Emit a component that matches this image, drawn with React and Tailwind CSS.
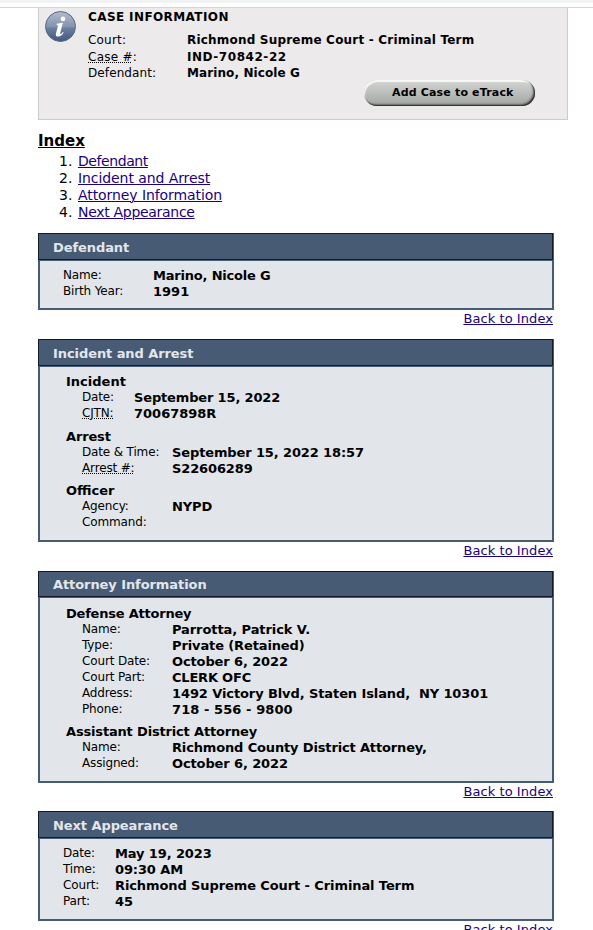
const caseRows = [
  ["Court:", "Richmond Supreme Court - Criminal Term", "h-[17px]", "tracking-[0.2px]", "tracking-[0.2px]"],
  ["Case #:", "IND-70842-22", "h-4", "tracking-[0.25px]", "tracking-[0.55px]"],
  ["Defendant:", "Marino, Nicole G", "h-4", "tracking-[0.1px]", "tracking-[0.1px]"],
];

const indexItems = [
  ["Defendant", "tracking-[-0.42px]"],
  ["Incident and Arrest", "tracking-[-0.08px]"],
  ["Attorney Information", "tracking-[-0.08px]"],
  ["Next Appearance", "tracking-[-0.3px]"],
];

function InfoIcon() {
  return (
    <svg className="h-[31px] w-[31px] shrink-0" viewBox="0 0 31 31">
      <defs>
        <linearGradient id="ball" x1="0" y1="0" x2="0" y2="1">
          <stop offset="0" stopColor="#b4bccb" />
          <stop offset="0.5" stopColor="#8494ae" />
          <stop offset="0.56" stopColor="#6b7f9f" />
          <stop offset="1" stopColor="#3f587c" />
        </linearGradient>
      </defs>
      <circle cx="15.5" cy="15.5" r="15" fill="url(#ball)" stroke="#566984" strokeWidth="1" />
      <circle cx="18" cy="7.9" r="2.3" fill="#fff" />
      <path
        d="M11.6 12.8 L17.9 11.7 L15.2 22 Q15 23.4 16.2 22.7 Q17.1 22.1 17.9 21 L18.7 21.5 Q16.4 25.3 13.2 25.6 Q10.2 25.6 10.9 22.7 L13 15 Q13.2 13.9 11.6 13.8 Z"
        fill="#fff"
      />
    </svg>
  );
}

const dottedLine = "underline decoration-dotted decoration-1 underline-offset-[1px]";
const linkStyle = "text-[#1b0080] underline decoration-1 underline-offset-[1px]";

function Row({ label, value, width, dotted, spacing = "tracking-[-0.12px]" }) {
  return (
    <div className="flex h-4 whitespace-pre leading-4">
      <div className={"-mt-px shrink-0 text-[12px] tracking-[-0.15px] " + width}>
        <span className={dotted ? dottedLine : ""}>{label}</span>
      </div>
      <div className={"text-[13px] font-bold " + spacing}>{value}</div>
    </div>
  );
}

function Group({ title, className = "", spacing = "", children }) {
  return (
    <div className={className}>
      <h3 className={"h-4 pl-[28px] text-[13px] font-bold leading-4 " + spacing}>{title}</h3>
      <div className="pl-[44px]">{children}</div>
    </div>
  );
}

function Panel({ title, height, header = "h-[27px] leading-[27px]", gap = "h-[29px]", children }) {
  return (
    <section>
      <div className={"flex w-[516px] flex-col bg-[#475b75] " + height}>
        <h2
          className={
            "w-[515px] shrink-0 border border-[#141b26] pl-[14px] text-[13px] font-bold tracking-[-0.08px] text-[#e3e6eb] " +
            header
          }
        >
          {title}
        </h2>
        <div className="mx-[2px] mb-[2px] mt-px flex-1 bg-[#e2e6eb] pt-[7px]">
          <div className="-ml-[2px]">{children}</div>
        </div>
      </div>
      <div className={"w-[515px] text-right text-[13px] leading-[17px] tracking-[0.07px] " + gap}>
        <a className={linkStyle}>Back to Index</a>
      </div>
    </section>
  );
}

export default function App() {
  return (
    <div className="h-[930px] w-[593px] overflow-hidden bg-white font-['DejaVu_Sans',Verdana,sans-serif] text-black">
      <div className="h-[3px] bg-[#f1f3f5]" />
      <div className="h-1" />
      <div className="border-t border-[#d6d6d6] pl-[38px]">
        <div className="flex h-[112px] w-[530px] border border-t-0 border-[#cccccc] bg-[#eceaeb] pl-[6px] pt-[3px]">
          <InfoIcon />
          <div className="ml-[12px] flex-1">
            <h1 className="-mt-[2px] h-[23px] text-[12px] font-bold leading-4 tracking-[0.4px]">CASE INFORMATION</h1>
            {caseRows.map(([label, value, h, labelSpacing, valueSpacing]) => (
              <div key={label} className={"flex whitespace-pre text-[12px] leading-4 " + h}>
                <div className={"w-[99px] shrink-0 " + labelSpacing}>
                  {label === "Case #:" ? (
                    <>
                      <span className={dottedLine}>Case #</span>:
                    </>
                  ) : (
                    label
                  )}
                </div>
                <div className={"font-bold " + valueSpacing}>{value}</div>
              </div>
            ))}
            <button className="-mt-px ml-[276px] flex h-[26px] w-[171px] items-center rounded-full bg-linear-to-b from-[#d3d6d3] to-[#a2a6a2] pl-[28px] text-[11px] font-bold tracking-[0.17px] shadow-[inset_-1px_-1px_1px_#2f312f,inset_-2px_-2px_2px_#6f726f,inset_1px_2px_1px_#f8f8f8]">
              Add Case to eTrack
            </button>
          </div>
        </div>
      </div>

      <main className="pl-[38px] pt-[12px]">
        <h2 className="h-[21px] text-[15px] font-bold leading-[18px] underline decoration-1 underline-offset-[1px]">
          Index
        </h2>
        <ol className="h-[80px]">
          {indexItems.map(([item, spacing], i) => (
            <li key={item} className="flex h-[17px] pl-[21px] text-[14px] leading-[17px]">
              <span className="w-[19px]">{i + 1}.</span>
              <a className={linkStyle + " " + spacing}>{item}</a>
            </li>
          ))}
        </ol>

        <Panel title="Defendant" height="h-[77px]">
          <div className="pl-[25px]">
            <Row label="Name:" value="Marino, Nicole G" width="w-[90px]" spacing="tracking-[-0.2px]" />
            <Row label="Birth Year:" value="1991" width="w-[90px]" spacing="" />
          </div>
        </Panel>

        <Panel title="Incident and Arrest" height="h-[203px]">
          <Group title="Incident">
            <Row label="Date:" value="September 15, 2022" width="w-[52px]" spacing="tracking-[-0.15px]" />
            <Row label="CJTN:" value="70067898R" width="w-[52px]" dotted spacing="" />
          </Group>
          <Group title="Arrest" className="mt-[7px]" spacing="tracking-[-0.15px]">
            <Row label="Date & Time:" value="September 15, 2022 18:57" width="w-[90px]" />
            <Row label="Arrest #:" value="S22606289" width="w-[90px]" dotted />
          </Group>
          <Group title="Officer" className="mt-[6px]">
            <Row label="Agency:" value="NYPD" width="w-[90px]" />
            <Row label="Command:" value="" width="w-[90px]" />
          </Group>
        </Panel>

        <Panel
          title="Attorney Information"
          height="h-[212px]"
          header="h-[26px] leading-[26px]"
          gap="h-[28px]"
        >
          <Group title="Defense Attorney" className="pt-px" spacing="tracking-[-0.22px]">
            <Row label="Name:" value="Parrotta, Patrick V." width="w-[90px]" spacing="tracking-[-0.08px]" />
            <Row label="Type:" value="Private (Retained)" width="w-[90px]" />
            <Row label="Court Date:" value="October 6, 2022" width="w-[90px]" />
            <Row label="Court Part:" value="CLERK OFC" width="w-[90px]" spacing="tracking-[-0.2px]" />
            <Row
              label="Address:"
              value="1492 Victory Blvd, Staten Island,  NY 10301"
              width="w-[90px]"
              spacing="tracking-[-0.1px]"
            />
            <Row label="Phone:" value="718 - 556 - 9800" width="w-[90px]" spacing="tracking-[0.08px]" />
          </Group>
          <Group title="Assistant District Attorney" className="mt-[6px]" spacing="tracking-[-0.17px]">
            <Row label="Name:" value="Richmond County District Attorney," width="w-[90px]" spacing="tracking-[-0.15px]" />
            <Row label="Assigned:" value="October 6, 2022" width="w-[90px]" />
          </Group>
        </Panel>

        <Panel title="Next Appearance" height="h-[110px]">
          <div className="pl-[25px]">
            <Row label="Date:" value="May 19, 2023" width="w-[52px]" />
            <Row label="Time:" value="09:30 AM" width="w-[52px]" />
            <Row
              label="Court:"
              value="Richmond Supreme Court - Criminal Term"
              width="w-[52px]"
              spacing="tracking-[-0.1px]"
            />
            <Row label="Part:" value="45" width="w-[52px]" />
          </div>
        </Panel>
      </main>
    </div>
  );
}
